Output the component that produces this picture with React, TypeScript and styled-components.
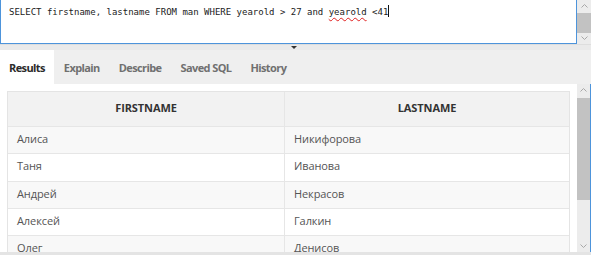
import React from 'react'
import styled, { createGlobalStyle } from 'styled-components'

const GlobalStyle = createGlobalStyle`
    html, body {
        margin: 0;
        padding: 0;
        background: #ffffff;
        overflow: hidden;
    }
`

const Page = styled.div`
    width: 591px;
    height: 255px;
    display: flex;
    flex-direction: column;
    overflow: hidden;
    font-family: "Open Sans", "Noto Sans", sans-serif;
    background: #ffffff;
`

const EditorRow = styled.div`
    height: 44px;
    display: flex;
    flex-shrink: 0;
`

const Editor = styled.div`
    flex: 1;
    box-sizing: border-box;
    border: 1px solid #4d94db;
    border-top: none;
    padding: 5px 8px;
    font-family: "DejaVu Sans Mono", "Liberation Mono", monospace;
    font-size: 9px;
    line-height: 14px;
    color: #222;
    white-space: pre;
`

const Misspelled = styled.span`
    text-decoration: underline wavy #e02020;
    text-decoration-thickness: 1px;
    text-underline-offset: 2px;
`

const Caret = styled.span`
    display: inline-block;
    width: 1px;
    height: 12px;
    background: #111;
    vertical-align: -2px;
`

const ScrollBar = styled.div<{ $edge?: boolean }>`
    width: 14px;
    flex-shrink: 0;
    box-sizing: border-box;
    background: #ececec;
    display: flex;
    flex-direction: column;
    align-items: center;
    border-right: ${p => (p.$edge ? '1px solid #4d94db' : 'none')};
`

const Arrow = styled.div`
    height: 12px;
    width: 100%;
    display: flex;
    align-items: center;
    justify-content: center;
`

const Thumb = styled.div<{ $top: number; $size: number }>`
    width: 100%;
    margin-top: ${p => p.$top}px;
    height: ${p => p.$size}px;
    background: #c2c2c2;
`

const Spacer = styled.div`
    flex: 1;
`

const ResizeBar = styled.div`
    height: 6px;
    flex-shrink: 0;
    background: #eaeaea;
    border-top: 1px solid #dedede;
    box-sizing: border-box;
    display: flex;
    justify-content: center;
    align-items: center;
    padding-right: 4px;
`

const Grip = styled.div`
    width: 0;
    height: 0;
    border-left: 3px solid transparent;
    border-right: 3px solid transparent;
    border-top: 3px solid #333;
`

const TabBar = styled.div`
    height: 34px;
    flex-shrink: 0;
    display: flex;
    background: #efefef;
`

const Tab = styled.div<{ $active?: boolean }>`
    padding: 0 9px;
    display: flex;
    align-items: center;
    font-size: 11px;
    font-weight: 700;
    letter-spacing: -0.6px;
    color: ${p => (p.$active ? '#2b2b2b' : '#707070')};
    background: ${p => (p.$active ? '#ffffff' : 'transparent')};
    margin-right: 1px;
`

const ResultsRow = styled.div`
    flex: 1;
    display: flex;
    min-height: 0;
`

const ResultsPane = styled.div`
    flex: 1;
    overflow: hidden;
    padding: 7px 7px 0 7px;
`

const Grid = styled.div`
    border: 1px solid #e4e4e4;
    border-bottom: none;
`

const Row = styled.div<{ $head?: boolean; $odd?: boolean }>`
    display: grid;
    grid-template-columns: 277px 1fr;
    height: ${p => (p.$head ? '34px' : '27.3px')};
    box-sizing: border-box;
    border-top: ${p => (p.$head ? 'none' : '1px solid #e6e6e6')};
    background: ${p => (p.$head ? '#f2f2f2' : p.$odd ? '#f8f8f8' : '#ffffff')};
`

const Cell = styled.div<{ $head?: boolean; $last?: boolean }>`
    display: flex;
    align-items: center;
    justify-content: ${p => (p.$head ? 'center' : 'flex-start')};
    padding: 0 9px 3px;
    font-size: 11px;
    font-weight: ${p => (p.$head ? 700 : 400)};
    letter-spacing: -0.1px;
    color: ${p => (p.$head ? '#333' : '#555')};
    border-right: ${p => (p.$last ? 'none' : '1px solid #e6e6e6')};
`

const BottomBar = styled.div`
    height: 3px;
    flex-shrink: 0;
    background: #e4e4e4;
`

const Chevron = ({ up }: { up?: boolean }) => (
    <svg width="7" height="4" viewBox="0 0 7 4">
        <path d={up ? 'M0.5 3.5 L3.5 0.5 L6.5 3.5' : 'M0.5 0.5 L3.5 3.5 L6.5 0.5'} fill="none" stroke="#a8a8a8" strokeWidth="1" />
    </svg>
)

const rows = [
    ['Алиса', 'Никифорова'],
    ['Таня', 'Иванова'],
    ['Андрей', 'Некрасов'],
    ['Алексей', 'Галкин'],
    ['Олег', 'Денисов'],
]

const tabs = ['Results', 'Explain', 'Describe', 'Saved SQL', 'History']

const App: React.FC = () => {
    return (
        <Page>
            <GlobalStyle />
            <EditorRow>
                <Editor>
                    SELECT firstname, lastname FROM man WHERE yearold &gt; 27 and <Misspelled>yearold</Misspelled> &lt;41<Caret />
                </Editor>
                <ScrollBar>
                    <Arrow><Chevron up /></Arrow>
                    <Thumb $top={2} $size={20} />
                    <Spacer />
                    <Arrow><Chevron /></Arrow>
                </ScrollBar>
            </EditorRow>

            <ResizeBar><Grip /></ResizeBar>

            <TabBar>
                {tabs.map((t, i) => (
                    <Tab key={t} $active={i === 0}>{t}</Tab>
                ))}
            </TabBar>

            <ResultsRow>
                <ResultsPane>
                    <Grid>
                        <Row $head>
                            <Cell $head>FIRSTNAME</Cell>
                            <Cell $head $last>LASTNAME</Cell>
                        </Row>
                        {rows.map((r, i) => (
                            <Row key={r[0]} $odd={i % 2 === 0}>
                                <Cell>{r[0]}</Cell>
                                <Cell $last>{r[1]}</Cell>
                            </Row>
                        ))}
                    </Grid>
                </ResultsPane>
                <ScrollBar $edge>
                    <Arrow><Chevron up /></Arrow>
                    <Thumb $top={2} $size={102} />
                    <Spacer />
                    <Arrow><Chevron /></Arrow>
                </ScrollBar>
            </ResultsRow>
            <BottomBar />
        </Page>
    )
}

export default App
